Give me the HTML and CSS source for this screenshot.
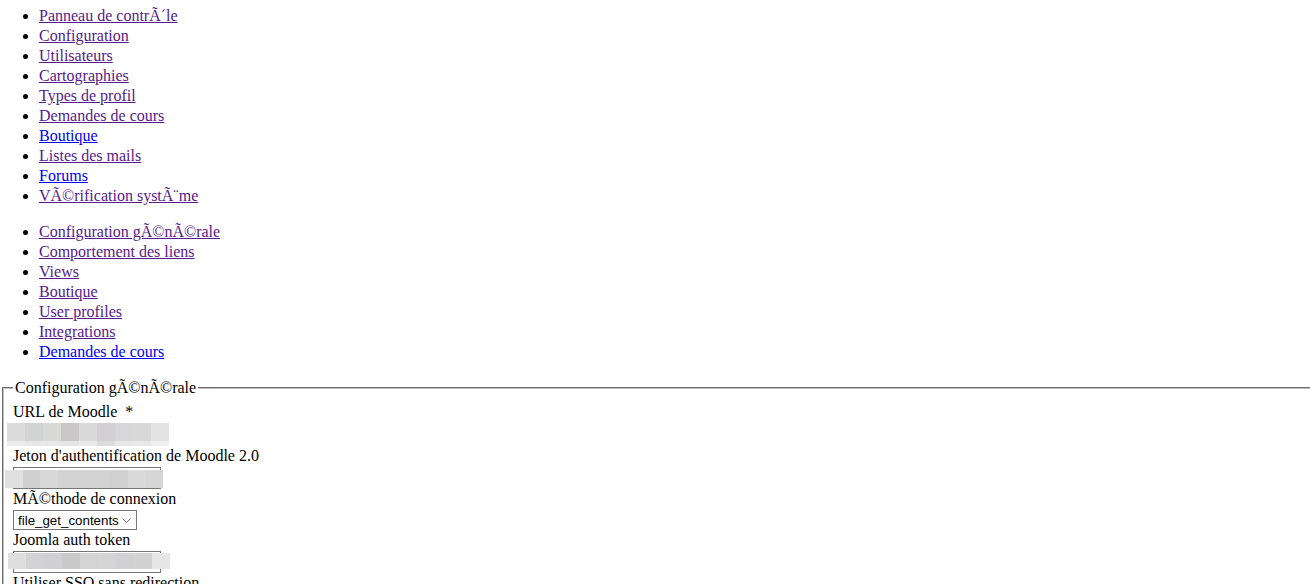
FILE: index.html
```html
<!DOCTYPE html>
<html lang="fr">
<head>
  <meta charset="UTF-8">
  <title>Configuration</title>
  <link rel="stylesheet" href="styles.css">
</head>
<body>
  <ul class="menu first">
    <li><a class="seen" href="#">Panneau de contrÃ´le</a></li>
    <li><a class="seen" href="#">Configuration</a></li>
    <li><a class="seen" href="#">Utilisateurs</a></li>
    <li><a class="seen" href="#">Cartographies</a></li>
    <li><a class="seen" href="#">Types de profil</a></li>
    <li><a class="seen" href="#">Demandes de cours</a></li>
    <li><a href="#">Boutique</a></li>
    <li><a class="seen" href="#">Listes des mails</a></li>
    <li><a href="#">Forums</a></li>
    <li><a class="seen" href="#">VÃ©rification systÃ¨me</a></li>
  </ul>
  <ul class="menu">
    <li><a class="seen" href="#">Configuration gÃ©nÃ©rale</a></li>
    <li><a class="seen" href="#">Comportement des liens</a></li>
    <li><a class="seen" href="#">Views</a></li>
    <li><a class="seen" href="#">Boutique</a></li>
    <li><a class="seen" href="#">User profiles</a></li>
    <li><a class="seen" href="#">Integrations</a></li>
    <li><a href="#">Demandes de cours</a></li>
  </ul>

  <fieldset class="config">
    <legend>Configuration gÃ©nÃ©rale</legend>

    <label class="lbl">URL de Moodle &nbsp;*</label>
    <div class="field f1">
      <input type="text" class="txt">
      <div class="mosaic m1">
        <div class="row top">
          <span style="background:#dcdada"></span><span style="background:#d2d3d5"></span><span style="background:#d8d8d6"></span><span style="background:#c8c6c7"></span><span style="background:#d9d9d9"></span><span style="background:#d2d0d3"></span><span style="background:#d7d6d8"></span><span style="background:#d9d8d9"></span><span style="background:#e3e3e3"></span>
        </div>
        <div class="row bottom">
          <span style="background:#ececec"></span><span style="background:#e7e7e7"></span><span style="background:#e8e8e8"></span><span style="background:#e6e6e6"></span><span style="background:#e9e9e9"></span><span style="background:#dcdcdc"></span><span style="background:#e7e7e7"></span><span style="background:#e8e8e8"></span><span style="background:#eeeeee"></span>
        </div>
      </div>
    </div>

    <label class="lbl">Jeton d'authentification de Moodle 2.0</label>
    <div class="field">
      <input type="text" class="txt">
      <div class="mosaic m2">
        <div class="row">
          <span style="background:#e0e0e0"></span><span style="background:#d0d0d0"></span><span style="background:#d8d8d8"></span><span style="background:#d3d3d3"></span><span style="background:#d3d3d3"></span><span style="background:#d3d3d3"></span><span style="background:#d1d1d1"></span><span style="background:#dadada"></span><span style="background:#d6d6d6"></span>
        </div>
      </div>
    </div>

    <label class="lbl">MÃ©thode de connexion</label>
    <div class="field">
      <div class="select-wrap">
        <select class="sel">
          <option>file_get_contents</option>
          <option>curl</option>
        </select>
        <svg class="chev" width="9" height="5" viewBox="0 0 9 5"><path d="M0.5 0.5 L4.5 4.5 L8.5 0.5" fill="none" stroke="#6d6d6d" stroke-width="1"/></svg>
      </div>
    </div>

    <label class="lbl">Joomla auth token</label>
    <div class="field">
      <input type="text" class="txt">
      <div class="mosaic m3">
        <div class="row">
          <span style="background:#dedede"></span><span style="background:#d3d3d5"></span><span style="background:#d0cfd1"></span><span style="background:#c9c9c9"></span><span style="background:#d4d4d4"></span><span style="background:#d5d5d5"></span><span style="background:#d1d0d2"></span><span style="background:#d2d2d2"></span><span style="background:#e6e6e6"></span>
        </div>
      </div>
    </div>

    <label class="lbl">Utiliser SSO sans redirection</label>
    <div class="field">
      <div class="select-wrap">
        <select class="sel short">
          <option>Non</option>
          <option>Oui</option>
        </select>
        <svg class="chev" width="9" height="5" viewBox="0 0 9 5"><path d="M0.5 0.5 L4.5 4.5 L8.5 0.5" fill="none" stroke="#6d6d6d" stroke-width="1"/></svg>
      </div>
    </div>
  </fieldset>
</body>
</html>
```

FILE: styles.css
```css
body {
  margin: 0;
  font-family: "Liberation Serif", "Times New Roman", serif;
  font-size: 16px;
  line-height: 20px;
  color: #000;
  background: #fff;
}

/* link lists */
.menu { margin: 0 0 16px; padding-left: 39px; }
.menu.first { margin-top: 6px; }
.menu a { color: #0000ee; }
.menu a.seen { color: #551a8b; }

/* settings block */
.config {
  margin: 0 0 0 2px;
  padding: 4px 9px 10px;
  border: 2px groove #c0c0c0;
  border-right: none;
  border-bottom: none;
}
.config legend { padding: 0 2px; }

.lbl { display: block; }
.field { position: relative; padding-top: 1px; }

.txt {
  display: block;
  box-sizing: border-box;
  width: 148px;
  height: 22px;
  margin: 0;
  border: 1px solid #767676;
  padding: 1px 2px;
  font-family: "Liberation Sans", Arial, sans-serif;
  font-size: 13px;
}
.f1 { height: 23px; }
.f1 .txt { height: 23px; }

.select-wrap { position: relative; width: 124px; }
.sel {
  display: block;
  box-sizing: border-box;
  width: 124px;
  height: 20px;
  margin: 0;
  padding: 0 0 0 4px;
  border: 1px solid #767676;
  border-radius: 0;
  background: #fff;
  appearance: none;
  -webkit-appearance: none;
  font-family: "Liberation Sans", Arial, sans-serif;
  font-size: 13.33px;
  color: #000;
}
.sel.short { width: 60px; }
.chev { position: absolute; right: 6px; top: 8px; }

/* blurred-out values */
.mosaic { position: absolute; display: flex; flex-direction: column; }
.mosaic .row { display: flex; flex: 1; }
.mosaic .row span { flex: 1; }
.m1 { left: -6px; top: 1px; width: 162px; height: 23px; }
.m1 .top { flex: 0 0 18px; }
.m1 .bottom { flex: 0 0 5px; }
.m2 { left: -8px; top: 4px; width: 158px; height: 18px; }
.m3 { left: -5px; top: 3px; width: 162px; height: 16px; }
```
